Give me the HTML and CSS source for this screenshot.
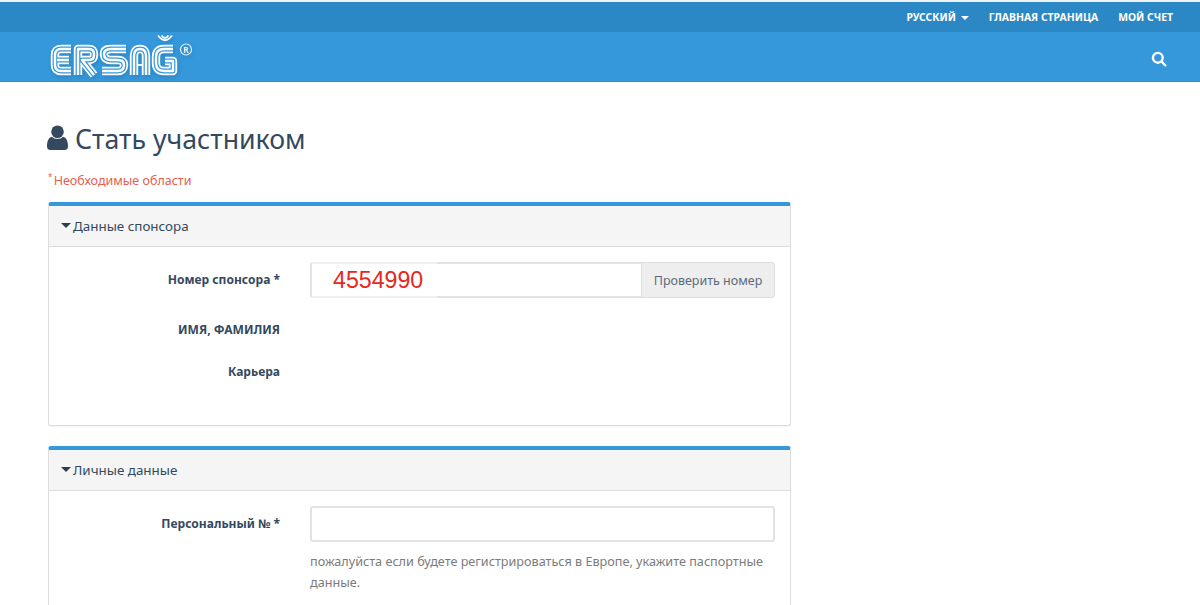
FILE: index.html
```html
<!DOCTYPE html>
<html lang="ru">
<head>
<meta charset="utf-8">
<title>Стать участником</title>
<link rel="stylesheet" href="styles.css">
</head>
<body>
<header class="site-header">
  <div class="topbar">
    <a class="toplink" href="#">Русский <span class="caret caret-white"></span></a>
    <a class="toplink" href="#">Главная страница</a>
    <a class="toplink" href="#">Мой счет</a>
  </div>
  <div class="navbar">
    <svg class="logo" width="146" height="49" viewBox="0 0 146 49" role="img" aria-label="ERSAĞ">
      <defs>
        <g id="letters" fill="none" stroke-linejoin="round" stroke-linecap="butt">
          <path d="M23 17H13Q7 17 7 23V33Q7 39 13 39H23M9 28H21"/>
          <path d="M30 43V17H41Q46 17 46 22V23Q46 28 41 28H34L46 43"/>
          <path d="M78 17H63Q56 17 56 22Q56 28 63 28H70Q76 28 76 33Q76 39 70 39H54"/>
          <path d="M86 43V24Q86 17 92 17Q98 17 98 24V43"/>
          <path d="M125 17H116Q108 17 108 25V31Q108 39 116 39H125V29H117"/>
        </g>
      </defs>
      <use href="#letters" class="lg lg1"/>
      <use href="#letters" class="lg lg2"/>
      <use href="#letters" class="lg lg3"/>
      <path class="breve" d="M110 3.500Q117 13 124 3.500M113.500 3.500Q117 8.500 120.500 3.500"/>
      <path class="breve" d="M90 33H94"/>
      <circle class="reg" cx="138" cy="17.500" r="5.500"/>
      <text class="regtext" x="138" y="20.500">R</text>
    </svg>
    <svg class="search" width="16" height="16" viewBox="0 0 16 16" aria-hidden="true">
      <circle cx="6.800" cy="6.800" r="4.900"/>
      <path d="M10.500 10.500L14.300 14.300"/>
    </svg>
  </div>
</header>
<main class="content">
  <h1 class="title">
    <svg class="user" width="21" height="26" viewBox="0 0 21 26" aria-hidden="true">
      <circle cx="10.500" cy="6.800" r="6.300"/>
      <path d="M0 21.500C0 16.500 1.500 12.500 5 11.800C6.500 13.200 8.300 14 10.500 14C12.700 14 14.500 13.200 16 11.800C19.500 12.500 21 16.500 21 21.500C21 24 19.500 25 17.500 25H3.500C1.500 25 0 24 0 21.500Z"/>
    </svg>
    Стать участником
  </h1>
  <p class="required"><sup class="star">*</sup> Необходимые области</p>

  <section class="panel panel-sponsor">
    <div class="panel-head"><span class="caret caret-dark"></span>Данные спонсора</div>
    <div class="panel-body">
      <div class="row">
        <label class="label">Номер спонсора *</label>
        <div class="group">
          <div class="input input-joined"><span class="sponsor-no">4554990</span></div>
          <button class="btn">Проверить номер</button>
        </div>
      </div>
      <div class="row row-static"><label class="label">ИМЯ, ФАМИЛИЯ</label></div>
      <div class="row row-static"><label class="label">Карьера</label></div>
    </div>
  </section>

  <section class="panel panel-personal">
    <div class="panel-head"><span class="caret caret-dark"></span>Личные данные</div>
    <div class="panel-body">
      <div class="row">
        <label class="label">Персональный № *</label>
        <div class="field">
          <div class="input"></div>
          <p class="help">пожалуйста если будете регистрироваться в Европе, укажите паспортные данные.</p>
        </div>
      </div>
    </div>
  </section>
</main>
</body>
</html>
```

FILE: styles.css
```css
* { box-sizing: border-box; }
html, body { margin: 0; height: 605px; overflow: hidden; }
body {
  background: #fff;
  color: #2c3e50;
  font-family: "Noto Sans", "Open Sans", sans-serif;
  font-size: 13px;
}
.site-header { border-top: 2px solid #eef3f7; }
.topbar {
  height: 30px;
  background: #2c88c5;
  display: flex;
  justify-content: flex-end;
  align-items: center;
  gap: 20px;
  padding: 0 27px 0 0;
}
.toplink {
  color: #fff;
  font-size: 10.400px;
  font-weight: 700;
  text-transform: uppercase;
  text-decoration: none;
}
.caret {
  display: inline-block;
  width: 0;
  height: 0;
  border-left: 4px solid transparent;
  border-right: 4px solid transparent;
  border-top: 4px solid;
  vertical-align: middle;
}
.caret-white { color: #fff; margin-left: 2px; }
.caret-dark { color: #2c3e50; margin-right: 2px; position: relative; top: -1px; border-left-width: 5px; border-right-width: 5px; border-top-width: 5px; }
.navbar {
  height: 50px;
  background: #3498db;
  border-bottom: 1px solid #2f8fd2;
  display: flex;
  align-items: flex-start;
  justify-content: space-between;
  padding: 0 33px 0 48px;
}
.logo { display: block; filter: drop-shadow(1px 2px 2px rgba(0, 0, 0, .12)); }
.lg { stroke: #fff; }
.lg1 { stroke-width: 8.400; }
.lg2 { stroke: #3498db; stroke-width: 4.800; }
.lg3 { stroke-width: 2.400; }
.breve { fill: none; stroke: #fff; stroke-width: 1.800; }
.reg { fill: none; stroke: #e4f0fa; stroke-width: 1.200; }
.regtext { fill: #e4f0fa; font-size: 8.500px; font-weight: 700; text-anchor: middle; font-family: "Noto Sans", sans-serif; }
.search { margin-top: 19px; fill: none; stroke: #fff; stroke-width: 2.400; stroke-linecap: round; }
.content { width: 743px; margin-left: 48px; }
.title {
  margin: 40px 0 0;
  font-size: 26.700px;
  font-weight: 400;
  line-height: 34px;
  color: #34495e;
  display: flex;
  align-items: center;
  gap: 7px;
}
.user { fill: #34495e; flex: none; margin: -3px 0 0 -1px; }
.required {
  margin: 16px 0 0;
  color: #e9604f;
  font-size: 12.500px;
  line-height: 18px;
}
.star { font-size: 8px; line-height: 0; margin-right: -2px; }
.panel {
  border: 1px solid #ddd;
  border-top: 4px solid #3498db;
  border-radius: 3px;
  background: #fff;
  box-shadow: 0 1px 1px rgba(0,0,0,.05);
}
.panel-sponsor { height: 224px; margin-top: 12px; }
.panel-personal { margin-top: 20px; height: 159px; border-bottom: 0; border-radius: 3px 3px 0 0; }
.panel-head {
  height: 41px;
  background: #f5f5f5;
  border-bottom: 1px solid #ddd;
  padding: 0 12px;
  display: flex;
  align-items: center;
  font-size: 13.400px;
  color: #34495e;
}
.panel-body { padding: 15px 15px 0 0; }
.row { display: flex; align-items: flex-start; }
.row-static { height: 42px; padding-top: 0; }
.panel-sponsor .row:first-child { height: 58px; }
.label {
  width: 231px;
  flex: none;
  text-align: right;
  font-size: 12.050px;
  font-weight: 700;
  line-height: 18px;
  padding-top: 9px;
  color: #34495e;
}
.row-static .label { padding-top: 1px; }
.group { display: flex; margin-left: 30px; flex: 1; }
.field { margin-left: 30px; flex: 1; }
.input {
  height: 36px;
  flex: 1;
  border: 2px solid #e3e3e3;
  border-radius: 3px;
  background: #fff;
}
.input-joined {
  border-radius: 3px 0 0 3px;
  border-right: 0;
  position: relative;
}
.sponsor-no {
  position: absolute;
  left: -2px;
  top: -2px;
  width: 127px;
  height: 36px;
  background: #fff;
  color: #e8281e;
  font-family: "Liberation Sans", sans-serif;
  font-size: 23.200px;
  line-height: 32px;
  padding-left: 21px;
  border: 2px solid #efefef;
  border-left-color: #e3e3e3;
  border-right: 0;
  border-radius: 3px 0 0 3px;
}
.btn {
  height: 36px;
  width: 134px;
  border: 1px solid #ddd;
  border-radius: 0 3px 3px 0;
  background: #eee;
  color: #5a6a7a;
  font: 12.500px "Noto Sans", "Open Sans", sans-serif;
  padding: 0;
}
.help {
  margin: 9px 0 0;
  font-size: 12.650px;
  line-height: 21px;
  color: #7b7b7b;
}
```
